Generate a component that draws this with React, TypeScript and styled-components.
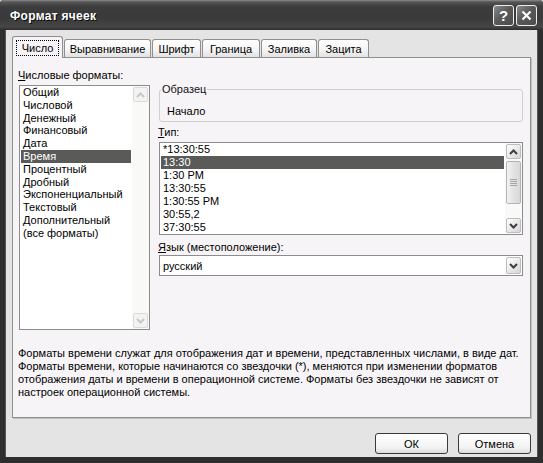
import React from 'react';
import styled, { createGlobalStyle } from 'styled-components';

const GlobalStyle = createGlobalStyle`
  html, body {
    margin: 0;
    padding: 0;
    background: #d8d8d8;
  }
  body {
    font-family: "Liberation Sans", Arial, sans-serif;
    font-size: 11px;
    color: #000;
  }
`;

const Window = styled.div`
  width: 543px;
  height: 463px;
  display: flex;
  flex-direction: column;
  border-radius: 4px 4px 0 0;
  overflow: hidden;
  background: #2a2a2a;
`;

const TitleBar = styled.div`
  height: 30px;
  flex: none;
  display: flex;
  align-items: center;
  gap: 2px;
  padding: 0 6px 0 10px;
  box-sizing: border-box;
  background: linear-gradient(#8c8c8c 0, #555 2px, #3c3c3c 7px, #3a3a3a 18px, #464646 27px, #2c2c2c 30px);
`;

const Title = styled.div`
  flex: 1;
  color: #fff;
  font-weight: bold;
  font-size: 12px;
  letter-spacing: 0.3px;
  text-shadow: 1px 1px 0 #0c0c0c;
  margin-top: 1px;
`;

const CaptionButton = styled.div`
  width: 21px;
  height: 21px;
  box-sizing: border-box;
  border: 1px solid #ededed;
  border-radius: 3px;
  background: linear-gradient(135deg, #8a8a8a, #5a5a5a 45%, #4c4c4c);
  display: flex;
  align-items: center;
  justify-content: center;
  color: #fff;
  font-weight: bold;
  font-size: 15px;
`;

const Frame = styled.div`
  flex: 1;
  display: flex;
  flex-direction: column;
  background: #e4e4e4;
  border: solid #2e2e2e;
  border-width: 0 5px 6px;
  box-shadow: inset 1px 0 0 #555, inset -1px 0 0 #555;
  padding: 6px 7px 3px;
  box-sizing: border-box;
`;

const TabRow = styled.div`
  height: 21px;
  display: flex;
  align-items: flex-end;
  gap: 1px;
  position: relative;
  z-index: 1;
`;

const Tab = styled.div<{ $active?: boolean; $w: number }>`
  width: ${p => p.$w}px;
  height: ${p => (p.$active ? 22 : 18)}px;
  margin-bottom: ${p => (p.$active ? -1 : 0)}px;
  box-sizing: border-box;
  border: 1px solid #8f8f8f;
  border-bottom: none;
  border-radius: 3px 3px 0 0;
  background: ${p =>
    p.$active ? '#f7f4f7' : 'linear-gradient(#fefefe, #f4f4f4 60%, #e2e2e2)'};
  display: flex;
  align-items: center;
  justify-content: center;
  white-space: nowrap;
`;

const FocusText = styled.span`
  border: 1px dotted #000;
  padding: 1px 5px;
  line-height: 12px;
`;

const Panel = styled.div`
  height: 361px;
  box-sizing: border-box;
  border: 1px solid #8f8f8f;
  background: #f7f4f7;
  box-shadow: 1px 1px 0 #c0c0c0;
  padding: 11px 7px 0 6px;
  display: grid;
  grid-template-columns: 131px 364px;
  column-gap: 9px;
  align-content: start;
`;

const Column = styled.div`
  display: flex;
  flex-direction: column;
`;

const FieldLabel = styled.div<{ $top?: number; $bottom?: number }>`
  line-height: 13px;
  height: 13px;
  margin-top: ${p => p.$top ?? 0}px;
  margin-bottom: ${p => p.$bottom ?? 0}px;
  margin-left: -1px;
  white-space: nowrap;
`;

const ListBox = styled.div<{ $h: number }>`
  height: ${p => p.$h}px;
  box-sizing: border-box;
  border: 1px solid #8c8c8c;
  background: #fff;
  display: flex;
`;

const Items = styled.div`
  flex: 1;
  padding: 0 1px;
  overflow: hidden;
`;

const Item = styled.div<{ $selected?: boolean; $row: number }>`
  height: ${p => p.$row}px;
  line-height: ${p => p.$row}px;
  padding-left: 2px;
  white-space: nowrap;
  background: ${p => (p.$selected ? '#5a5b59' : 'transparent')};
  color: ${p => (p.$selected ? '#fff' : '#000')};
`;

const ScrollTrack = styled.div`
  width: 17px;
  flex: none;
  display: flex;
  flex-direction: column;
  padding: 1px;
  box-sizing: border-box;
  background: #f9f9f8;
`;

const ScrollButton = styled.div<{ $disabled?: boolean; $h?: number }>`
  height: ${p => p.$h ?? 15}px;
  width: 15px;
  flex: none;
  box-sizing: border-box;
  border: 1px solid ${p => (p.$disabled ? '#dadada' : '#bdbdbd')};
  border-radius: 2px;
  background: ${p =>
    p.$disabled ? '#f3f3f3' : 'linear-gradient(135deg, #ffffff, #e6e6e6 60%, #d6d6d6)'};
  display: flex;
  align-items: center;
  justify-content: center;
  color: ${p => (p.$disabled ? '#c6c6c6' : '#3e3e3e')};
`;

const ScrollSpace = styled.div<{ $offset: number }>`
  flex: 1;
  padding-top: ${p => p.$offset}px;
`;

const Thumb = styled.div<{ $h: number }>`
  height: ${p => p.$h}px;
  width: 15px;
  box-sizing: border-box;
  border: 1px solid #b4b4b4;
  border-radius: 2px;
  background: linear-gradient(90deg, #f2f2f2, #e2e2e2 50%, #d8d8d8);
  display: flex;
  align-items: center;
  justify-content: center;
`;

const Group = styled.fieldset`
  margin: 14px 0 0;
  padding: 9px 6px 3px 1px;
  border: 1px solid #d0d0d0;
  border-radius: 3px;
  min-width: 0;
`;

const Legend = styled.legend`
  padding: 0 1px;
  line-height: 13px;
  color: #111;
`;

const Sample = styled.div`
  line-height: 13px;
  padding-left: 6px;
`;

const Combo = styled.div`
  height: 21px;
  box-sizing: border-box;
  border: 1px solid #8c8c8c;
  background: #fff;
  display: flex;
  align-items: center;
  padding: 1px;
`;

const ComboText = styled.div`
  flex: 1;
  padding-left: 2px;
`;

const Description = styled.div`
  grid-column: 1 / -1;
  margin-top: 17px;
  margin-left: -1px;
  line-height: 13px;
  white-space: nowrap;
`;

const Footer = styled.div`
  display: flex;
  justify-content: flex-end;
  gap: 10px;
  margin-top: 15px;
`;

const Button = styled.button`
  width: 73px;
  height: 21px;
  box-sizing: border-box;
  border: 1px solid #3a3a3a;
  border-radius: 3px;
  background: linear-gradient(#ffffff, #f3f3f3 70%, #dcdcdc);
  font-family: inherit;
  font-size: 11px;
  color: #000;
  padding: 0;
`;

const Chevron = ({ up }: { up?: boolean }) => (
  <svg width="9" height="6" viewBox="0 0 9 6">
    <path
      d={up ? 'M1 5 L4.5 1.5 L8 5' : 'M1 1 L4.5 4.5 L8 1'}
      fill="none"
      stroke="currentColor"
      strokeWidth="2"
    />
  </svg>
);

const Grip = () => (
  <svg width="7" height="8" viewBox="0 0 7 8">
    {[0, 2, 4, 6].map(y => (
      <rect key={y} x="0" y={y} width="7" height="1" fill="#a6a6a6" />
    ))}
  </svg>
);

interface ScrollProps {
  disabled?: boolean;
  thumbOffset?: number;
  thumbHeight?: number;
}

const Scrollbar: React.FC<ScrollProps> = ({ disabled, thumbOffset = 0, thumbHeight }) => (
  <ScrollTrack>
    <ScrollButton $disabled={disabled}>
      <Chevron up />
    </ScrollButton>
    <ScrollSpace $offset={thumbOffset}>
      {thumbHeight && (
        <Thumb $h={thumbHeight}>
          <Grip />
        </Thumb>
      )}
    </ScrollSpace>
    <ScrollButton $disabled={disabled}>
      <Chevron />
    </ScrollButton>
  </ScrollTrack>
);

const categories = [
  'Общий',
  'Числовой',
  'Денежный',
  'Финансовый',
  'Дата',
  'Время',
  'Процентный',
  'Дробный',
  'Экспоненциальный',
  'Текстовый',
  'Дополнительный',
  '(все форматы)',
];

const types = ['*13:30:55', '13:30', '1:30 PM', '13:30:55', '1:30:55 PM', '30:55,2', '37:30:55'];

const tabs = [
  { label: 'Число', w: 51 },
  { label: 'Выравнивание', w: 87 },
  { label: 'Шрифт', w: 49 },
  { label: 'Граница', w: 58 },
  { label: 'Заливка', w: 56 },
  { label: 'Зацита', w: 51 },
];

export default function App() {
  return (
    <>
      <GlobalStyle />
      <Window>
        <TitleBar>
          <Title>Формат ячеек</Title>
          <CaptionButton>?</CaptionButton>
          <CaptionButton>
            <svg width="11" height="11" viewBox="0 0 11 11">
              <path d="M1.5 1.5 L9.5 9.5 M9.5 1.5 L1.5 9.5" stroke="#fff" strokeWidth="2.2" />
            </svg>
          </CaptionButton>
        </TitleBar>
        <Frame>
          <TabRow>
            {tabs.map((t, i) => (
              <Tab key={t.label} $w={t.w} $active={i === 0}>
                {i === 0 ? <FocusText>{t.label}</FocusText> : t.label}
              </Tab>
            ))}
          </TabRow>
          <Panel>
            <Column>
              <FieldLabel $bottom={3}>
                <u>Ч</u>исловые форматы:
              </FieldLabel>
              <ListBox $h={245}>
                <Items>
                  {categories.map(c => (
                    <Item key={c} $row={12.8} $selected={c === 'Время'}>
                      {c}
                    </Item>
                  ))}
                </Items>
                <Scrollbar disabled />
              </ListBox>
            </Column>
            <Column>
              <Group>
                <Legend>Образец</Legend>
                <Sample>Начало</Sample>
              </Group>
              <FieldLabel $top={4} $bottom={3}>
                <u>Т</u>ип:
              </FieldLabel>
              <ListBox $h={93}>
                <Items>
                  {types.map((t, i) => (
                    <Item key={i} $row={13} $selected={i === 1}>
                      {t}
                    </Item>
                  ))}
                </Items>
                <Scrollbar thumbOffset={2} thumbHeight={43} />
              </ListBox>
              <FieldLabel $top={6} $bottom={1}>
                <u>Я</u>зык (местоположение):
              </FieldLabel>
              <Combo>
                <ComboText>русский</ComboText>
                <ScrollButton $h={17}>
                  <Chevron />
                </ScrollButton>
              </Combo>
            </Column>
            <Description>
              Форматы времени служат для отображения дат и времени, представленных числами, в виде дат.
              <br />
              Форматы времени, которые начинаются со звездочки (*), меняются при изменении форматов
              <br />
              отображения даты и времени в операционной системе. Форматы без звездочки не зависят от
              <br />
              настроек операционной системы.
            </Description>
          </Panel>
          <Footer>
            <Button>ОК</Button>
            <Button>Отмена</Button>
          </Footer>
        </Frame>
      </Window>
    </>
  );
}
